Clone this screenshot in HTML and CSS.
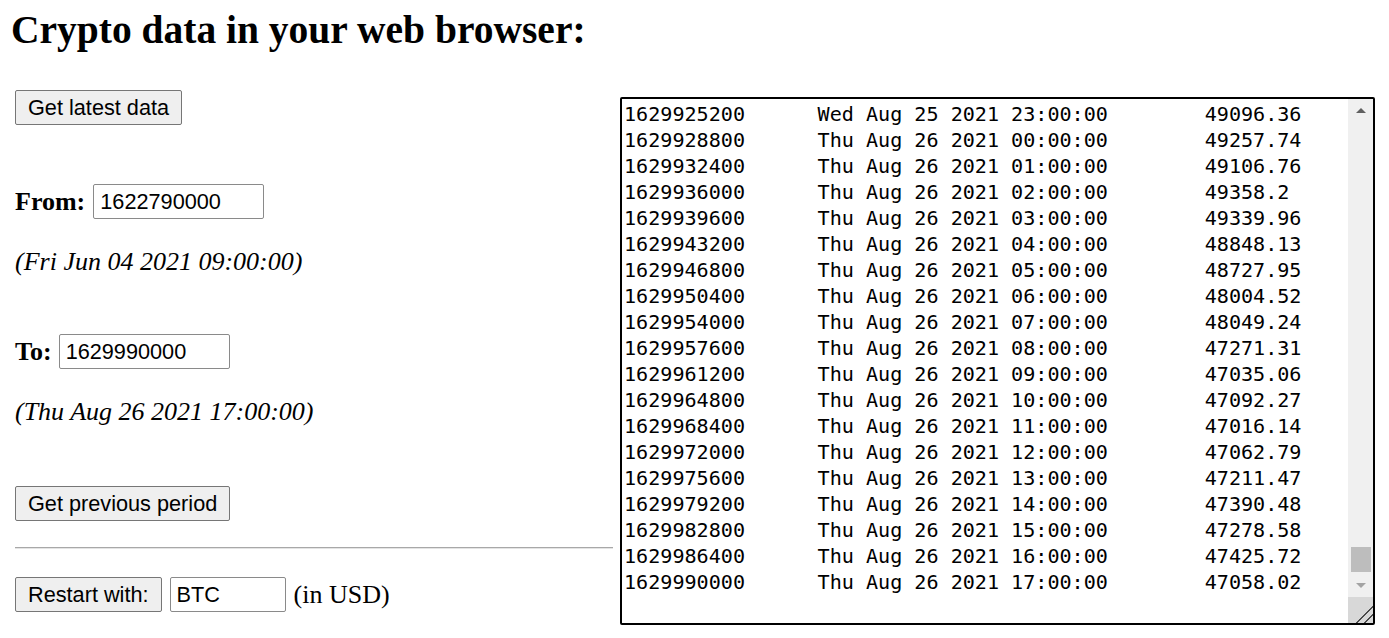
FILE: index.html
```html
<!DOCTYPE html>
<html lang="en">
<head>
<meta charset="utf-8">
<title>Crypto data in your web browser</title>
<link rel="stylesheet" href="styles.css">
<script src="script.js" defer></script>
</head>
<body>
<h1 class="title">Crypto data in your web browser:</h1>
<div class="main">
  <div class="controls">
    <div class="row">
      <button class="btn" type="button">Get latest data</button>
    </div>
    <div class="row row-from">
      <label class="label" for="from">From:</label>
      <input class="field field-ts" id="from" type="text" value="1622790000">
    </div>
    <div class="date">(Fri Jun 04 2021 09:00:00)</div>
    <div class="row row-to">
      <label class="label" for="to">To:</label>
      <input class="field field-ts" id="to" type="text" value="1629990000">
    </div>
    <div class="date">(Thu Aug 26 2021 17:00:00)</div>
    <div class="row row-prev">
      <button class="btn" type="button">Get previous period</button>
    </div>
    <div class="rule"></div>
    <div class="row row-restart">
      <button class="btn" type="button">Restart with:</button>
      <input class="field field-sym" type="text" value="BTC">
      <span class="unit">(in USD)</span>
    </div>
  </div>
  <div class="data-wrap">
    <textarea class="data" spellcheck="false"></textarea>
    <div class="sb" aria-hidden="true">
      <div class="sb-btn"><span class="arrow-up"></span></div>
      <div class="sb-track"><div class="sb-thumb"></div></div>
      <div class="sb-btn"><span class="arrow-down"></span></div>
      <div class="sb-resizer"></div>
    </div>
  </div>
</div>
</body>
</html>
```
FILE: styles.css
```css
html, body {
  margin: 0;
  padding: 0;
  background: #ffffff;
  color: #000000;
}

body {
  font-family: "Liberation Serif", "Times New Roman", serif;
  font-size: 26px;
}

.title {
  margin: 6px 0 0 11px;
  font-size: 39.5px;
  line-height: 48px;
  font-weight: bold;
}

.main {
  display: flex;
  align-items: flex-start;
  margin-top: 36px;
  padding-left: 15px;
}

.controls {
  width: 598px;
  display: flex;
  flex-direction: column;
  align-items: flex-start;
}

.row {
  display: flex;
  align-items: center;
  gap: 8px;
  height: 35px;
}

.row-from { margin-top: 59px; }
.row-to { margin-top: 57px; }
.row-prev { margin-top: 59px; }
.row-restart { margin-top: 28px; }

.row-to { gap: 7px; }

.label {
  font-weight: bold;
  font-size: 26px;
}

.date {
  margin-top: 28px;
  font-style: italic;
  line-height: 30px;
}

.btn {
  box-sizing: border-box;
  height: 35px;
  margin: 0;
  padding: 0 12px;
  font-family: "Liberation Sans", Arial, sans-serif;
  font-size: 21.7px;
  color: #000;
  background: #efefef;
  border: 1px solid #767676;
  border-radius: 2px;
}

.field {
  box-sizing: border-box;
  height: 35px;
  margin: 0;
  padding: 0 6px;
  font-family: "Liberation Sans", Arial, sans-serif;
  font-size: 21.7px;
  color: #000;
  background: #fff;
  border: 1px solid #8a8a8a;
  border-radius: 2px;
}

.field-ts { width: 171px; }
.field-sym { width: 116px; }

.unit {
  font-size: 26px;
}

.rule {
  align-self: stretch;
  margin-top: 26px;
  border-top: 1px solid #a8a8a8;
  border-bottom: 1px solid #e4e4e4;
}

.data-wrap {
  position: relative;
  width: 755px;
  height: 528px;
  margin: 7px 0 0 7px;
}

.data {
  display: block;
  box-sizing: border-box;
  width: 100%;
  height: 100%;
  margin: 0;
  padding: 2px 27px 2px 2px;
  font-family: "DejaVu Sans Mono", "Liberation Mono", monospace;
  font-size: 20.1px;
  line-height: 26px;
  tab-size: 8;
  color: #000;
  background: #fff;
  border: 2px solid #000;
  border-radius: 2px;
  outline: none;
  overflow-y: scroll;
  white-space: pre;
  resize: none;
}

.sb {
  position: absolute;
  top: 2px;
  right: 2px;
  bottom: 2px;
  width: 25px;
  display: flex;
  flex-direction: column;
  background: #f0f0f0;
}

.sb-btn {
  height: 23px;
  display: flex;
  align-items: center;
  justify-content: center;
}

.arrow-up {
  width: 0;
  height: 0;
  border-left: 5px solid transparent;
  border-right: 5px solid transparent;
  border-bottom: 5px solid #606060;
}

.arrow-down {
  width: 0;
  height: 0;
  border-left: 5px solid transparent;
  border-right: 5px solid transparent;
  border-top: 5px solid #a3a3a3;
}

.sb-track {
  flex: 1;
  display: flex;
  flex-direction: column;
  justify-content: flex-end;
  align-items: center;
  padding-bottom: 2px;
}

.sb-thumb {
  width: 20px;
  height: 25px;
  background: #bdbdbd;
}

.sb-resizer {
  height: 26px;
  background-color: #d8d8d8;
  background-image:
    linear-gradient(135deg, transparent 66%, #4a4a4a 66%, #4a4a4a 70%, transparent 70%, transparent 82%, #4a4a4a 82%, #4a4a4a 86%, transparent 86%);
}
```
FILE: script.js
```js
(function () {
  var ta = document.querySelector('.data');
  var days = ['Sun', 'Mon', 'Tue', 'Wed', 'Thu', 'Fri', 'Sat'];
  var months = ['Jan', 'Feb', 'Mar', 'Apr', 'May', 'Jun', 'Jul', 'Aug', 'Sep', 'Oct', 'Nov', 'Dec'];
  var known = {
    1629925200: '49096.36',
    1629928800: '49257.74',
    1629932400: '49106.76',
    1629936000: '49358.2',
    1629939600: '49339.96',
    1629943200: '48848.13',
    1629946800: '48727.95',
    1629950400: '48004.52',
    1629954000: '48049.24',
    1629957600: '47271.31',
    1629961200: '47035.06',
    1629964800: '47092.27',
    1629968400: '47016.14',
    1629972000: '47062.79',
    1629975600: '47211.47',
    1629979200: '47390.48',
    1629982800: '47278.58',
    1629986400: '47425.72',
    1629990000: '47058.02'
  };
  function pad(n) { return (n < 10 ? '0' : '') + n; }
  function fmt(t) {
    var d = new Date((t + 7200) * 1000);
    return days[d.getUTCDay()] + ' ' + months[d.getUTCMonth()] + ' ' + pad(d.getUTCDate()) + ' ' +
      d.getUTCFullYear() + ' ' + pad(d.getUTCHours()) + ':' + pad(d.getUTCMinutes()) + ':' + pad(d.getUTCSeconds());
  }
  var seed = 12345;
  function rnd() { seed = (seed * 1103515245 + 12345) % 2147483648; return seed / 2147483648; }
  var start = 1622790000, end = 1629990000;
  var total = (end - start) / 3600;
  var lines = [];
  for (var i = 0; i <= total; i++) {
    var t = start + i * 3600;
    var price;
    if (known[t]) {
      price = known[t];
    } else {
      var base = 36800 + (49000 - 36800) * (i / total);
      var p = base + (rnd() - 0.5) * 1400;
      price = (Math.round(p * 100) / 100).toString();
    }
    lines.push(t + '\t' + fmt(t) + '\t' + price);
  }
  ta.value = lines.join('\n') + '\n';
  ta.scrollTop = ta.scrollHeight;
})();
```
